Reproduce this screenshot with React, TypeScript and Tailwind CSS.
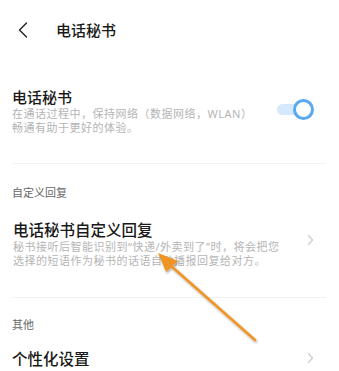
import React from "react";

const font = { fontFamily: '"Noto Sans CJK SC", "Noto Sans", sans-serif' };
const subFont = { fontFamily: '"Noto Sans", "Noto Sans CJK SC", sans-serif' };

function Chevron() {
  return (
    <svg width="7" height="12" viewBox="0 0 7 12" className="shrink-0">
      <path d="M1.5 1.5 L5.5 6 L1.5 10.5" fill="none" stroke="#cfcfcf" strokeWidth="1.3" strokeLinecap="round" strokeLinejoin="round" />
    </svg>
  );
}

export default function App() {
  return (
    <div className="relative w-[339px] h-[371px] overflow-hidden bg-white" style={font}>
      {/* header */}
      <div className="h-[59px] flex items-center pl-[18px]">
        <svg width="10" height="16" viewBox="0 0 10 16">
          <path d="M8.5 1 L1.5 8 L8.5 15" fill="none" stroke="#222" strokeWidth="1.4" strokeLinecap="round" strokeLinejoin="round" />
        </svg>
        <span className="ml-[28px] text-[15px] leading-[20px] font-medium text-[#1a1a1a]">电话秘书</span>
      </div>

      {/* secretary toggle */}
      <div className="mt-[28px] mx-[12px] flex items-start">
        <div className="flex-1">
          <div className="text-[15px] leading-[20px] font-medium text-[#1a1a1a]">电话秘书</div>
          <div className="text-[11px] leading-[14px] text-[#b5b5b5] tracking-[0.5px]" style={subFont}>
            <div>在通话过程中，保持网络（数据网络，WLAN）</div>
            <div>畅通有助于更好的体验。</div>
          </div>
        </div>
        <div className="relative w-[40px] h-[22px] mt-[11px] mr-[13px] flex items-center">
          <div className="absolute left-[3px] w-[26px] h-[11px] rounded-full bg-[#d6e8fb]" />
          <div className="absolute right-0 w-[21px] h-[21px] rounded-full border-[3px] border-[#5aa8f2] bg-white" />
        </div>
      </div>

      <div className="mt-[28px] mx-[13px] h-px bg-[#f2f2f2]" />

      {/* custom reply */}
      <div className="mt-[21px] px-[12px] text-[11px] leading-[14px] text-[#666]">自定义回复</div>
      <div className="mt-[19px] mx-[13px] flex items-center">
        <div className="flex-1">
          <div className="text-[15.5px] leading-[22px] font-medium text-[#1a1a1a]">电话秘书自定义回复</div>
          <div className="text-[11px] leading-[14px] text-[#b5b5b5] tracking-[0.5px]" style={subFont}>
            <div>秘书接听后智能识别到“快递/外卖到了”时，将会把您</div>
            <div>选择的短语作为秘书的话语自动播报回复给对方。</div>
          </div>
        </div>
        <div className="mr-[12px] mb-[6px]">
          <Chevron />
        </div>
      </div>

      <div className="mt-[29px] mx-[13px] h-px bg-[#f2f2f2]" />

      {/* other */}
      <div className="mt-[19px] px-[12px] text-[11px] leading-[14px] text-[#666]">其他</div>
      <div className="mt-[16px] mx-[12px] flex items-center">
        <div className="flex-1 text-[15.5px] leading-[22px] font-medium text-[#1a1a1a]">个性化设置</div>
        <div className="mr-[13px]">
          <Chevron />
        </div>
      </div>

      {/* annotation arrow overlay */}
      <svg className="absolute left-0 top-0 pointer-events-none" width="339" height="371" viewBox="0 0 339 371">
        <defs>
          <filter id="sh" x="-20%" y="-20%" width="140%" height="140%">
            <feDropShadow dx="1" dy="1.5" stdDeviation="1.2" floodColor="#000" floodOpacity="0.35" />
          </filter>
        </defs>
        <g filter="url(#sh)">
          <line x1="255" y1="340" x2="170" y2="265" stroke="#ee9528" strokeWidth="2.6" strokeLinecap="round" />
          <polygon points="158,253 178,261 166,272" fill="#ee9528" />
        </g>
      </svg>
    </div>
  );
}
